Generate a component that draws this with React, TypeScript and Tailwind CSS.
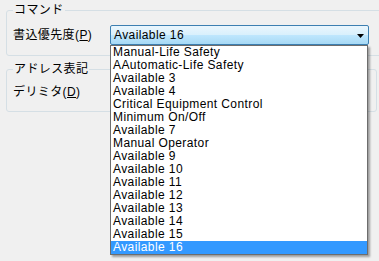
import React from 'react';

const items = [
  'Manual-Life Safety',
  'AAutomatic-Life Safety',
  'Available 3',
  'Available 4',
  'Critical Equipment Control',
  'Minimum On/Off',
  'Available 7',
  'Manual Operator',
  'Available 9',
  'Available 10',
  'Available 11',
  'Available 12',
  'Available 13',
  'Available 14',
  'Available 15',
  'Available 16',
];

const font = { fontFamily: '"Liberation Sans", "Noto Sans CJK JP", sans-serif' };

export default function App() {
  const selected = 'Available 16';

  return (
    <div
      className="relative w-[379px] h-[261px] overflow-hidden bg-[#f0f0f0] pt-[3px] pl-[6px] text-[12px] tracking-[0.4px] text-black"
      style={font}
    >
      <fieldset className="w-[390px] border border-[#d5dfe5] rounded-[3px] pl-[6px] pt-[7px] pb-[10px]">
        <legend className="px-[1px] leading-[15px]">コマンド</legend>
        <div className="flex items-center h-[20px]">
          <span className="w-[97px] leading-[14px]">
            書込優先度(<span className="underline">P</span>)
          </span>
          <div className="flex items-center justify-between w-[259px] h-[20px] border border-[#3c7fb1] rounded-[2px] bg-[linear-gradient(to_bottom,#eaf6fd_0%,#d9f0fc_48%,#bee6fd_52%,#a7d9f5_100%)] pl-[3px] pr-[4px]">
            <span className="leading-[14px]">{selected}</span>
            <svg width="7" height="4" viewBox="0 0 7 4" className="mt-[1px]">
              <path d="M0 0H7L3.5 4Z" fill="#000" />
            </svg>
          </div>
        </div>
      </fieldset>

      <fieldset className="mt-[6px] w-[371px] border border-[#d5dfe5] rounded-[3px] pl-[6px] pt-[5px] pb-[9px]">
        <legend className="px-[1px] leading-[15px]">アドレス表記</legend>
        <div className="flex items-center h-[20px]">
          <span className="leading-[14px]">
            デリミタ(<span className="underline">D</span>)
          </span>
        </div>
      </fieldset>

      {/* open dropdown list */}
      <ul className="absolute left-[110px] top-[45px] w-[258px] border border-[#6d6d6d] bg-white shadow-[2px_2px_2px_rgba(0,0,0,0.35)]">
        {items.map((item) => (
          <li
            key={item}
            className={
              item === selected
                ? 'h-[13px] leading-[13px] pl-[2px] bg-[#3399ff] text-white'
                : 'h-[13px] leading-[13px] pl-[2px]'
            }
          >
            {item}
          </li>
        ))}
      </ul>
    </div>
  );
}
